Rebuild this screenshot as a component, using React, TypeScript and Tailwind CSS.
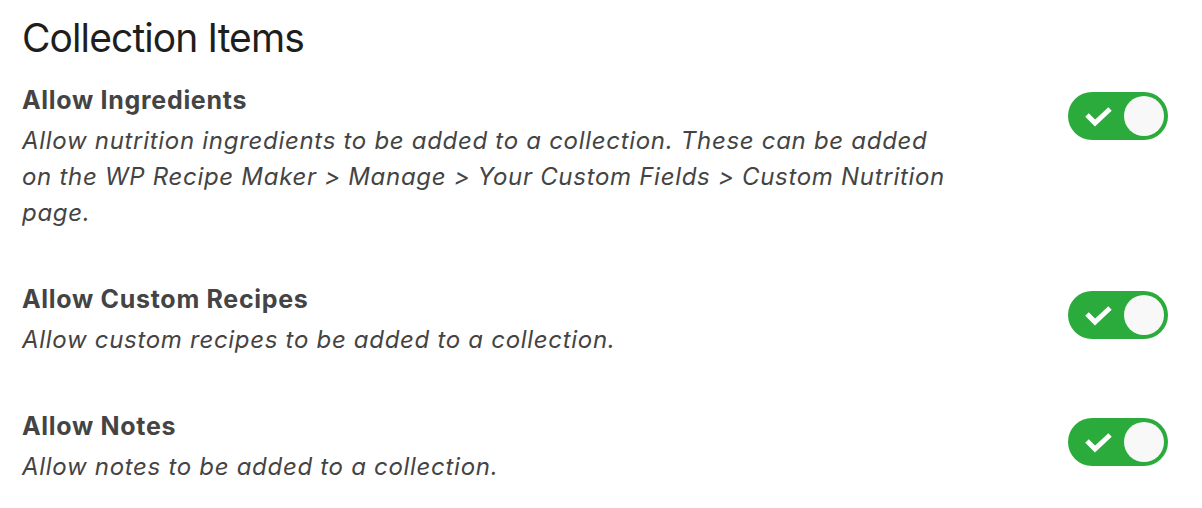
const items = [
  {
    title: "Allow Ingredients",
    description:
      "Allow nutrition ingredients to be added to a collection. These can be added on the WP Recipe Maker > Manage > Your Custom Fields > Custom Nutrition page.",
  },
  {
    title: "Allow Custom Recipes",
    description: "Allow custom recipes to be added to a collection.",
  },
  {
    title: "Allow Notes",
    description: "Allow notes to be added to a collection.",
  },
];

function Toggle() {
  return (
    <div className="flex h-[48px] w-[100px] shrink-0 items-center justify-between rounded-full bg-[#2bab3c] p-[4px]">
      <svg viewBox="0 0 30 22" className="ml-[12px] h-[22px] w-[30px]">
        <polyline
          points="3,10 11,18 26,4"
          fill="none"
          stroke="white"
          strokeWidth="5"
          strokeLinecap="butt"
          strokeLinejoin="miter"
        />
      </svg>
      <div className="h-[40px] w-[40px] rounded-full bg-[#f8f8f8]" />
    </div>
  );
}

export default function App() {
  return (
    <div className="min-h-screen bg-white px-[22px] pt-[12px] font-['Inter',sans-serif]">
      <h1 className="text-[39px] leading-[52px] font-normal tracking-[-0.9px] text-[#1e1e1e]">
        Collection Items
      </h1>

      <div className="mt-[18px] flex w-[1146px] flex-col gap-[50px]">
        {items.map((item) => (
          <div key={item.title} className="flex items-start justify-between">
            <div className="w-[940px]">
              <h3 className="text-[25px] leading-[36px] font-bold tracking-[0.7px] text-[#444]">
                {item.title}
              </h3>
              <p className="mt-[5px] text-[24px] leading-[36px] italic tracking-[0.7px] text-[#444]">
                {item.description}
              </p>
            </div>
            <div className="pt-[10px]">
              <Toggle />
            </div>
          </div>
        ))}
      </div>
    </div>
  );
}
